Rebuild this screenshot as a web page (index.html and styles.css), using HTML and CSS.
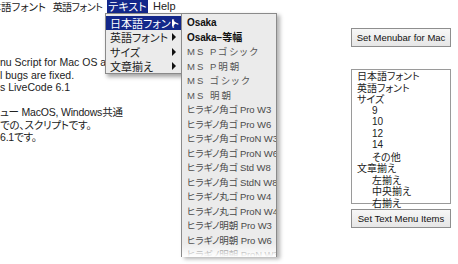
FILE: index.html
```html
<!DOCTYPE html>
<html lang="ja">
<head>
<meta charset="utf-8">
<title>Menu Script</title>
<link rel="stylesheet" href="styles.css">
</head>
<body>
<div class="menubar">
  <span class="menu-title clipped">日本語フォント</span>
  <span class="menu-title wide">英語フォント</span>
  <span class="menu-title active">テキスト</span>
  <span class="menu-title help">Help</span>
</div>

<div class="main">
  <div class="notes">
    <p>nu Script for Mac OS and Windows</p>
    <p>l bugs are fixed.</p>
    <p>s LiveCode 6.1</p>
    <p>&nbsp;</p>
    <p class="ja">ュー MacOS, Windows共通</p>
    <p class="ja">での、スクリプトです。</p>
    <p class="ja">6.1です。</p>
  </div>

  <div class="side">
    <button class="btn" type="button">Set Menubar for Mac</button>
    <ul class="listbox">
      <li>日本語フォント</li>
      <li>英語フォント</li>
      <li>サイズ</li>
      <li class="sub num">9</li>
      <li class="sub num">10</li>
      <li class="sub num">12</li>
      <li class="sub num">14</li>
      <li class="sub">その他</li>
      <li>文章揃え</li>
      <li class="sub">左揃え</li>
      <li class="sub">中央揃え</li>
      <li class="sub">右揃え</li>
    </ul>
    <button class="btn" type="button">Set Text Menu Items</button>
  </div>
</div>

<ul class="dropdown">
  <li class="selected">日本語フォント<span class="arrow"></span></li>
  <li>英語フォント<span class="arrow"></span></li>
  <li>サイズ<span class="arrow"></span></li>
  <li>文章揃え<span class="arrow"></span></li>
</ul>

<ul class="submenu">
  <li class="osaka">Osaka</li>
  <li class="osaka">Osaka−等幅</li>
  <li class="ms">MS Pゴシック</li>
  <li class="ms">MS P明朝</li>
  <li class="ms">MS ゴシック</li>
  <li class="ms">MS 明朝</li>
  <li>ヒラギノ角ゴ Pro W3</li>
  <li>ヒラギノ角ゴ Pro W6</li>
  <li>ヒラギノ角ゴ ProN W3</li>
  <li>ヒラギノ角ゴ ProN W6</li>
  <li>ヒラギノ角ゴ Std W8</li>
  <li>ヒラギノ角ゴ StdN W8</li>
  <li>ヒラギノ丸ゴ Pro W4</li>
  <li>ヒラギノ丸ゴ ProN W4</li>
  <li>ヒラギノ明朝 Pro W3</li>
  <li>ヒラギノ明朝 Pro W6</li>
  <li>ヒラギノ明朝 ProN W3</li>
</ul>
</body>
</html>
```

FILE: styles.css
```css
html, body {
  margin: 0;
  padding: 0;
  width: 458px;
  height: 264px;
  overflow: hidden;
  background: #fff;
  color: #1a1a1a;
  font-family: "Liberation Sans", "Noto Sans CJK JP", sans-serif;
  font-size: 11px;
  font-feature-settings: "palt";
}

ul {
  margin: 0;
  padding: 0;
  list-style: none;
}

/* menubar */
.menubar {
  display: flex;
  height: 13px;
  font-family: "Noto Sans CJK JP", sans-serif;
  font-size: 11px;
  line-height: 13px;
  white-space: nowrap;
}
.menu-title {
  display: flex;
  justify-content: center;
  flex: none;
  box-sizing: border-box;
  color: #222;
}
.menu-title.clipped {
  width: 48px;
  overflow: hidden;
  justify-content: flex-end;
  padding-right: 2px;
  font-size: 10.5px;
}
.menu-title.wide {
  width: 59px;
  font-size: 10px;
  letter-spacing: -0.5px;
}
.menu-title.active {
  width: 41px;
  background: #13278a;
  color: #fff;
}
.menu-title.help {
  font-family: "Liberation Sans", sans-serif;
  padding-left: 5px;
}

/* main area */
.main {
  display: flex;
  justify-content: space-between;
  padding-top: 15px;
}

.notes {
  padding-top: 28px;
  width: 340px;
  overflow: hidden;
  white-space: nowrap;
  font-size: 10.5px;
  line-height: 12.5px;
  color: #222;
}
.notes p {
  margin: 0;
}
.notes .ja {
  letter-spacing: -0.2px;
}

.side {
  display: flex;
  flex-direction: column;
  width: 100px;
  margin-right: 7px;
}

.btn {
  height: 19px;
  margin: 0;
  padding: 0;
  border: 1px solid #8e8e8e;
  background: linear-gradient(#f7f7f7, #e6e6e6);
  font-family: "Liberation Sans", sans-serif;
  font-size: 9.5px;
  color: #111;
  white-space: nowrap;
}

.listbox {
  margin-top: 22px;
  margin-bottom: 5px;
  height: 133px;
  border: 1px solid #9a9a9a;
  padding: 0 0 0 5px;
  font-family: "Noto Sans CJK JP", sans-serif;
  font-size: 10px;
  line-height: 11.5px;
  color: #222;
}
.listbox .sub {
  padding-left: 15px;
}
.listbox .num {
  font-family: "Liberation Sans", sans-serif;
}

/* pulled-down menu */
.dropdown {
  position: absolute;
  left: 105px;
  top: 13px;
  width: 76px;
  padding: 2px 0 0;
  background: #ebebeb;
  border: 1px solid #8a8a8a;
  box-shadow: 2px 3px 4px rgba(0, 0, 0, 0.35);
  font-family: "Noto Sans CJK JP", sans-serif;
  font-size: 11px;
  line-height: 14.3px;
  color: #222;
}
.dropdown li {
  position: relative;
  padding-left: 4px;
}
.dropdown li.selected {
  background: #13278a;
  color: #fff;
}
.arrow {
  position: absolute;
  right: 6px;
  top: 3px;
  width: 0;
  height: 0;
  border-top: 4px solid transparent;
  border-bottom: 4px solid transparent;
  border-left: 4px solid #111;
}
.selected .arrow {
  border-left-color: #fff;
}

.submenu {
  position: absolute;
  left: 181px;
  top: 13px;
  width: 96px;
  height: 244px;
  overflow: hidden;
  padding-top: 2px;
  box-sizing: border-box;
  background: #ebebeb;
  border: 1px solid #8a8a8a;
  border-bottom: none;
  box-shadow: 3px 2px 4px rgba(0, 0, 0, 0.3);
  font-family: "Liberation Sans", "Noto Sans CJK JP", sans-serif;
  font-size: 9.5px;
  letter-spacing: -0.1px;
  line-height: 14.5px;
  color: #4a4a4a;
  white-space: nowrap;
}
.submenu li {
  padding-left: 5px;
}
.submenu .osaka {
  font-size: 10px;
  color: #111;
  font-weight: bold;
}
.submenu .ms {
  letter-spacing: 2px;
  color: #555;
}
.submenu::after {
  content: "";
  position: absolute;
  left: 0;
  right: 0;
  bottom: 0;
  height: 14px;
  background: linear-gradient(rgba(255, 255, 255, 0), #fff);
}
```
